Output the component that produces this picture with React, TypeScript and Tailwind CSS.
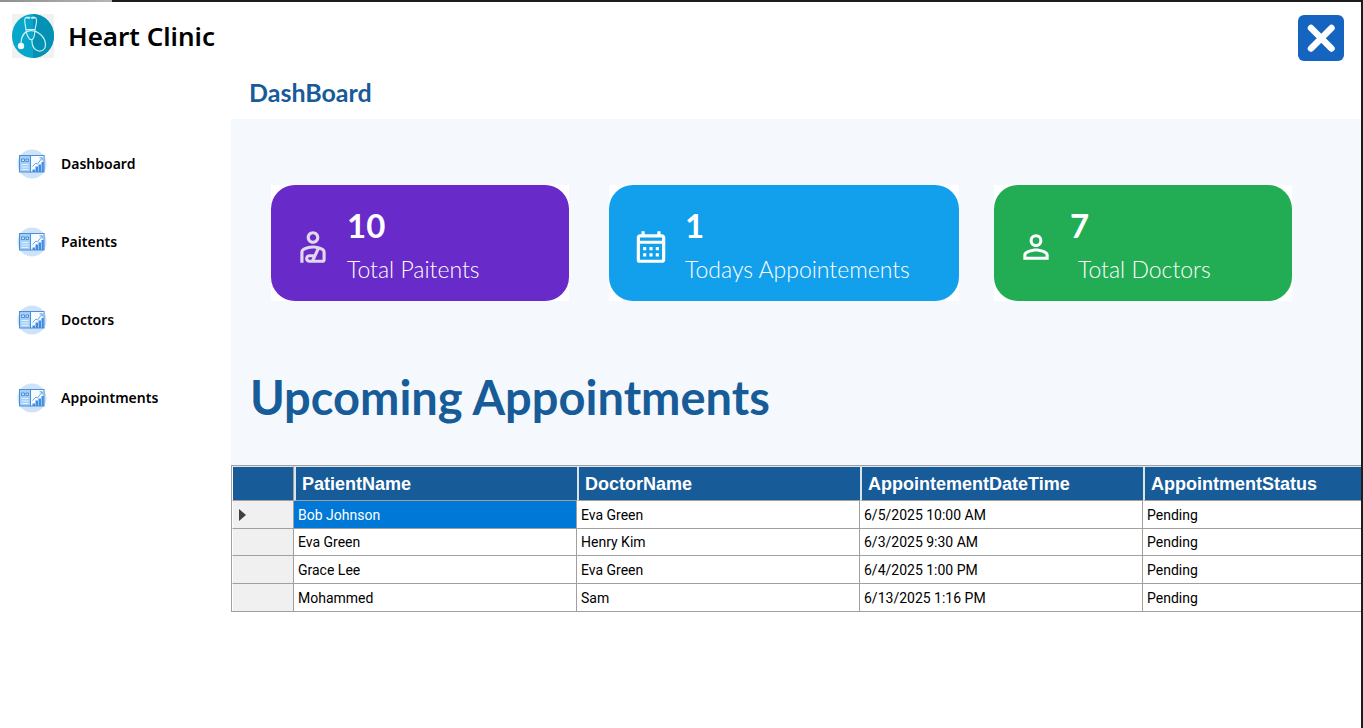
import type { ReactNode } from "react";
import {
  MdOutlineCalendarMonth,
  MdOutlinePersonalInjury,
  MdPersonOutline,
} from "react-icons/md";

const navItems = ["Dashboard", "Paitents", "Doctors", "Appointments"];

const columns = [
  "PatientName",
  "DoctorName",
  "AppointementDateTime",
  "AppointmentStatus",
];

const appointments = [
  ["Bob Johnson", "Eva Green", "6/5/2025 10:00 AM", "Pending"],
  ["Eva Green", "Henry Kim", "6/3/2025 9:30 AM", "Pending"],
  ["Grace Lee", "Eva Green", "6/4/2025 1:00 PM", "Pending"],
  ["Mohammed", "Sam", "6/13/2025 1:16 PM", "Pending"],
];

function Logo() {
  return (
    <svg viewBox="0 0 42 44" className="h-11 w-[42px] bg-[#f0f1f1]" aria-hidden="true">
      <ellipse cx="21" cy="22" rx="21" ry="22" fill="#07a6cb" />
      <path d="M21 0a21 22 0 0 1 0 44z" fill="#0591b4" />
      <g fill="none" stroke="#c9eef7" strokeWidth="1.2" strokeLinecap="round" strokeLinejoin="round">
        <path d="M16 3.500C13 3 12.500 4.500 12.800 8L14 15.500H23L24.500 8C24.800 4.500 24 3 21 3.500" />
        <path d="M15.500 3.700h2M20 3.700h2" strokeWidth="2" />
        <path d="M14 15.500C14.500 20 16.500 24 18 25.500h2.500C22 24 22.800 20 23 15.500" />
        <path d="M9 29C9.500 21 13 17 18.500 16.700 26 16.500 33.500 23 33.500 31c0 4.500-3.500 6.500-7 6-4-.8-6.500-4.500-6.700-11" />
      </g>
      <circle cx="9" cy="32" r="3.200" fill="#f4fcff" />
    </svg>
  );
}

function NavIcon() {
  return (
    <svg viewBox="0 0 30 30" className="size-[30px] shrink-0" aria-hidden="true">
      <circle cx="15" cy="15" r="14.500" fill="#cfe2f8" />
      <rect x="2.500" y="6.500" width="11" height="16.500" fill="#a3cef8" stroke="#4a90d9" />
      <rect x="13.500" y="6.500" width="13.500" height="16.500" fill="#f6fbff" stroke="#4a90d9" />
      <path d="M4.500 10h3v2.500h-3zM9 10h2.500v2.500H9z" fill="#cfe8ff" stroke="#3a7fc8" strokeWidth=".8" />
      <path d="M4.500 15.500h7M4.500 18h7M4.500 20.500h7" stroke="#e3f2ff" />
      <path d="M15.500 17.500l3.500-3.500 1.500 1L25 9M22.500 8.800h2.800v2.800" fill="none" stroke="#6aa9e8" />
      <path d="M15.500 20.500h2.500v2.500h-2.500zM18.500 17.500h2.500v5.500h-2.500zM21.500 15.500h2.500v7.500h-2.500zM24.500 13h2.300v10h-2.300z" fill="#3f8de0" />
    </svg>
  );
}

type StatCardProps = {
  icon: ReactNode;
  value: number;
  label: string;
  frame: string;
  color: string;
  labelClass?: string;
};

function StatCard({ icon, value, label, frame, color, labelClass = "" }: StatCardProps) {
  return (
    <div className={`bg-white ${frame}`}>
      <div
        className={`flex h-[116px] items-center rounded-3xl pt-2 pl-[23px] text-white ${color}`}
      >
        <span className="shrink-0">{icon}</span>
        <div className="ml-[15px] flex flex-col gap-3 pb-1 font-['Lato',sans-serif] whitespace-nowrap">
          <span className="text-[33px] leading-9 font-bold">{value}</span>
          <span className={`text-[23px] leading-7 font-light ${labelClass}`}>{label}</span>
        </div>
      </div>
    </div>
  );
}

export default function App() {
  return (
    <div className="flex min-h-screen flex-col bg-white text-black">
      <div className="flex h-[2px] bg-[#1f1c1e]">
        <div className="w-28 bg-linear-to-r from-[#8f8f8f] to-[#b5b5b5]" />
      </div>
      <div className="flex grow flex-col border-r-2 border-[#1f1c1e]">
        <header className="flex h-[72px] items-center justify-between pr-[17px] pl-3">
          <div className="flex items-center gap-[14px] pb-1">
            <Logo />
            <h1 className="font-['Noto_Sans',sans-serif] text-[26px] leading-8 font-semibold">
              Heart Clinic
            </h1>
          </div>
          <button
            type="button"
            aria-label="Close"
            className="flex size-[46px] items-center justify-center rounded-md bg-[#1565c0]"
          >
            <svg viewBox="0 0 46 46" className="size-[46px]" aria-hidden="true">
              <path d="M13 13l20.500 20.500M33.500 13L13 33.500" stroke="#fff" strokeWidth="6.500" strokeLinecap="round" />
            </svg>
          </button>
        </header>

        <div className="flex grow">
          <nav className="w-[231px] shrink-0 pt-[75px]">
            <ul className="flex flex-col gap-12">
              {navItems.map((item) => (
                <li key={item}>
                  <a
                    href="#"
                    className="flex items-center gap-[14px] pl-[17px] font-['Noto_Sans',sans-serif] text-sm leading-5 font-semibold"
                  >
                    <NavIcon />
                    {item}
                  </a>
                </li>
              ))}
            </ul>
          </nav>

          <main className="min-w-0 grow">
            <h2 className="h-[45px] pl-[18px] font-['Lato',sans-serif] text-[25px] leading-9 font-bold text-[#175c99]">
              DashBoard
            </h2>
            <div className="bg-[#f5f9fd] pt-[66px]">
              <div className="flex pr-[69px] pl-10">
                <StatCard
                  frame="flex-[298]"
                  color="bg-[#682ac8]"
                  icon={<MdOutlinePersonalInjury className="size-[38px] text-[#e0d8ec]" />}
                  value={10}
                  label="Total Paitents"
                />
                <StatCard
                  frame="ml-10 flex-[350]"
                  color="bg-[#12a0ed]"
                  icon={<MdOutlineCalendarMonth className="size-[38px]" />}
                  value={1}
                  label="Todays Appointements"
                />
                <StatCard
                  frame="ml-[35px] flex-[298]"
                  color="bg-[#22ad54]"
                  icon={<MdPersonOutline className="size-[38px]" />}
                  value={7}
                  label="Total Doctors"
                  labelClass="pl-2"
                />
              </div>
              <h2 className="pt-16 pb-9 pl-[19px] font-['Lato',sans-serif] text-[47px] leading-16 font-bold text-[#175c99]">
                Upcoming Appointments
              </h2>
            </div>

            <div className="overflow-hidden border-y border-l border-[#a0a0a0]">
              <table className="w-full table-fixed border-separate border-spacing-0 text-left">
                <thead>
                  <tr className="h-[35px] bg-[#175c99] font-['Liberation_Sans',sans-serif] text-lg leading-6 text-white">
                    <th
                      aria-label="Current row"
                      className="w-[62px] border-t border-r border-b border-l border-[#a0a0a0] border-t-[#dce6ee] border-l-white"
                    />
                    {columns.map((column) => (
                      <th
                        key={column}
                        scope="col"
                        className="w-[283px] border-t border-b border-l-2 border-[#a0a0a0] border-t-[#dce6ee] border-l-[#dce3e9] pl-[6px] font-bold last:w-auto"
                      >
                        {column}
                      </th>
                    ))}
                  </tr>
                </thead>
                <tbody className="font-['Roboto',sans-serif] text-sm leading-5">
                  {appointments.map((row, rowIndex) => (
                    <tr key={rowIndex} className="group odd:h-7 even:h-[27px]">
                      <td className="border-r border-b border-l border-[#a0a0a0] border-l-white bg-[#f0f0f0] pl-[6px] group-last:border-b-0">
                        {rowIndex === 0 && (
                          <svg viewBox="0 0 7 12" className="h-3 w-[7px]" aria-hidden="true">
                            <path d="M0 0l7 6-7 6z" fill="#404040" />
                          </svg>
                        )}
                      </td>
                      {row.map((cell, cellIndex) => (
                        <td
                          key={cellIndex}
                          className={`border-b border-[#a0a0a0] py-[3px] pl-1 group-last:border-b-0 not-last:border-r ${
                            rowIndex === 0 && cellIndex === 0 ? "bg-[#0078d7] text-white" : "bg-white"
                          }`}
                        >
                          {cell}
                        </td>
                      ))}
                    </tr>
                  ))}
                </tbody>
              </table>
            </div>
          </main>
        </div>
      </div>
    </div>
  );
}
